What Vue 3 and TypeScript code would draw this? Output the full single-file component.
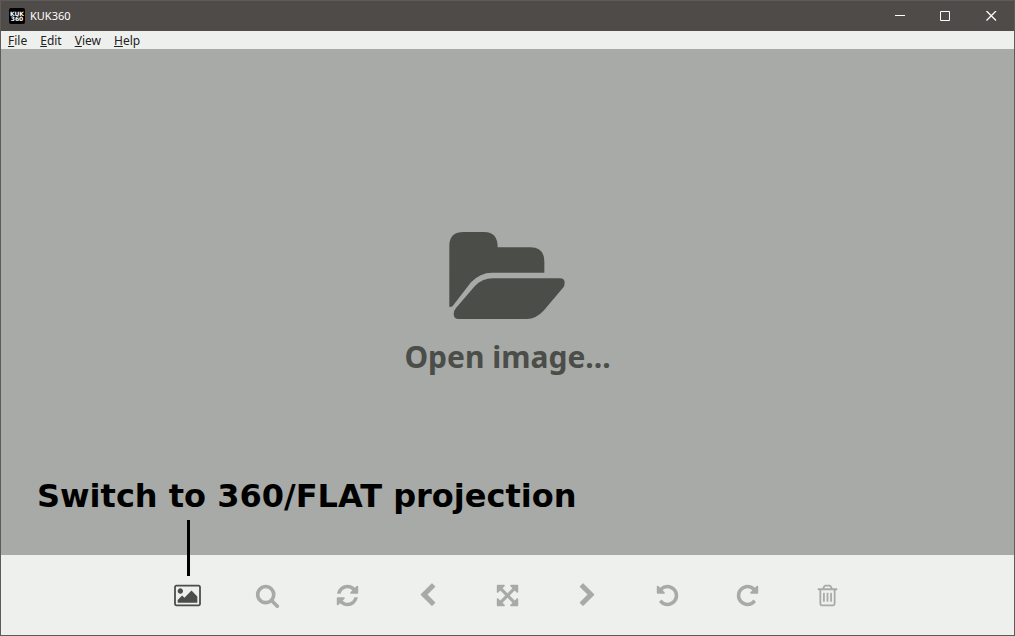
<script setup lang="ts">
interface MenuEntry {
  key: string
  rest: string
}

interface Tool {
  label: string
  viewWidth: number
  width: number
  path: string
  enabled: boolean
}

const menus: MenuEntry[] = [
  { key: 'F', rest: 'ile' },
  { key: 'E', rest: 'dit' },
  { key: 'V', rest: 'iew' },
  { key: 'H', rest: 'elp' },
]

const undoPath =
  'M1664 896q0 156-61 298t-164 245-245 164-298 61q-172 0-327-72.5t-264-204.5q-7-10-6.5-22.5t8.5-20.5l137-138q10-9 25-9 16 2 23 12 73 95 179 147t225 52q104 0 198.5-40.5t163.5-109.5 109.5-163.5 40.5-198.5-40.5-198.5-109.5-163.5-163.5-109.5-198.5-40.5q-98 0-188 35.5t-160 101.5l137 138q31 30 14 69-17 40-59 40h-448q-26 0-45-19t-19-45v-448q0-42 40-59 39-17 69 14l130 129q107-101 244.5-156.5t284.5-55.5q156 0 298 61t245 164 164 245 61 298z'

const redoPath =
  'M1664 256v448q0 26-19 45t-45 19h-448q-42 0-59-40-17-39 14-69l138-138q-148-137-349-137-104 0-198.5 40.5t-163.5 109.5-109.5 163.5-40.5 198.5 40.5 198.5 109.5 163.5 163.5 109.5 198.5 40.5q119 0 225-52t179-147q7-10 23-12 15 0 25 9l137 138q9 8 9.5 20.5t-7.5 22.5q-109 132-264 204.5t-327 72.5q-156 0-298-61t-245-164-164-245-61-298 61-298 164-245 245-164 298-61q147 0 284.5 55.5t244.5 156.5l130-129q29-31 70-14 39 17 39 59z'

const tools: Tool[] = [
  {
    label: 'Switch projection',
    viewWidth: 1920,
    width: 27,
    enabled: true,
    path: 'M640 576q0 80-56 136t-136 56-136-56-56-136 56-136 136-56 136 56 56 136zm1024 384v448h-1408v-192l320-320 160 160 512-512zm96-704h-1600q-13 0-22.5 9.5t-9.5 22.5v1216q0 13 9.5 22.5t22.5 9.5h1600q13 0 22.5-9.5t9.5-22.5v-1216q0-13-9.5-22.5t-22.5-9.5zm160 32v1216q0 66-47 113t-113 47h-1600q-66 0-113-47t-47-113v-1216q0-66 47-113t113-47h1600q66 0 113 47t47 113z',
  },
  {
    label: 'Zoom',
    viewWidth: 1792,
    width: 25,
    enabled: false,
    path: 'M1216 832q0-185-131.5-316.5t-316.5-131.5-316.5 131.5-131.5 316.5 131.5 316.5 316.5 131.5 316.5-131.5 131.5-316.5zm512 832q0 52-38 90t-90 38q-54 0-90-38l-343-342q-179 124-399 124-143 0-273.5-55.5t-225-150-150-225-55.5-273.5 55.5-273.5 150-225 225-150 273.5-55.5 273.5 55.5 225 150 150 225 55.5 273.5q0 220-124 399l343 343q37 37 37 90z',
  },
  {
    label: 'Reset',
    viewWidth: 1792,
    width: 25,
    enabled: false,
    path: 'M1639 1056q0 5-1 7-64 268-268 434.5t-478 166.5q-146 0-282.5-55t-243.5-157l-129 129q-19 19-45 19t-45-19-19-45v-448q0-26 19-45t45-19h448q26 0 45 19t19 45-19 45l-137 137q71 66 161 102t187 36q134 0 250-65t186-179q11-17 53-117 8-23 30-23h192q13 0 22.5 9.5t9.5 22.5zm25-800v448q0 26-19 45t-45 19h-448q-26 0-45-19t-19-45 19-45l138-138q-148-137-349-137-134 0-250 65t-186 179q-11 17-53 117-8 23-30 23h-199q-13 0-22.5-9.5t-9.5-22.5v-7q65-268 270-434.5t480-166.5q146 0 284 55.5t245 156.5l130-129q19-19 45-19t45 19 19 45z',
  },
  {
    label: 'Previous image',
    viewWidth: 1792,
    width: 25,
    enabled: false,
    path: 'M1427 301l-531 531 531 531q19 19 19 45t-19 45l-166 166q-19 19-45 19t-45-19l-742-742q-19-19-19-45t19-45l742-742q19-19 45-19t45 19l166 166q19 19 19 45t-19 45z',
  },
  {
    label: 'Fullscreen',
    viewWidth: 1792,
    width: 25,
    enabled: false,
    path: 'M1411 541l-355 355 355 355 144-144q29-31 70-14 39 17 39 59v448q0 26-19 45t-45 19h-448q-42 0-59-40-17-39 14-69l144-144-355-355-355 355 144 144q31 30 14 69-17 40-59 40h-448q-26 0-45-19t-19-45v-448q0-42 40-59 39-17 69 14l144 144 355-355-355-355-144 144q-19 19-45 19-12 0-24-5-40-17-40-59v-448q0-26 19-45t45-19h448q42 0 59 40 17 39-14 69l-144 144 355 355 355-355-144-144q-31-30-14-69 17-40 59-40h448q26 0 45 19t19 45v448q0 42-39 59-13 5-25 5-26 0-45-19z',
  },
  {
    label: 'Next image',
    viewWidth: 1792,
    width: 25,
    enabled: false,
    path: 'M1363 877l-742 742q-19 19-45 19t-45-19l-166-166q-19-19-19-45t19-45l531-531-531-531q-19-19-19-45t19-45l166-166q19-19 45-19t45 19l742 742q19 19 19 45t-19 45z',
  },
  { label: 'Rotate left', viewWidth: 1792, width: 25, enabled: false, path: undoPath },
  { label: 'Rotate right', viewWidth: 1792, width: 25, enabled: false, path: redoPath },
  {
    label: 'Delete',
    viewWidth: 1792,
    width: 25,
    enabled: false,
    path: 'M704 736v576q0 14-9 23t-23 9h-64q-14 0-23-9t-9-23v-576q0-14 9-23t23-9h64q14 0 23 9t9 23zm256 0v576q0 14-9 23t-23 9h-64q-14 0-23-9t-9-23v-576q0-14 9-23t23-9h64q14 0 23 9t9 23zm256 0v576q0 14-9 23t-23 9h-64q-14 0-23-9t-9-23v-576q0-14 9-23t23-9h64q14 0 23 9t9 23zm128 724v-948h-896v948q0 22 7 40.5t14.5 27 10.5 8.5h832q3 0 10.5-8.5t14.5-27 7-40.5zm-672-1076h448l-48-117q-7-9-17-11h-317q-10 2-17 11zm928 32v64q0 14-9 23t-23 9h-96v948q0 83-47 143.5t-113 60.5h-832q-66 0-113-58.5t-47-141.5v-952h-96q-14 0-23-9t-9-23v-64q0-14 9-23t23-9h309l70-167q15-37 54-63t79-26h320q40 0 79 26t54 63l70 167h309q14 0 23 9t9 23z',
  },
]
</script>

<template>
  <div class="window">
    <header class="titlebar">
      <svg class="logo" viewBox="0 0 16 16" aria-hidden="true">
        <rect width="16" height="16" rx="2" fill="#000" />
        <text x="8" y="8" text-anchor="middle">KUK</text>
        <text x="8" y="13" text-anchor="middle">360</text>
      </svg>
      <span class="title">KUK360</span>
      <div class="controls">
        <button type="button" aria-label="Minimize">
          <svg viewBox="0 0 11 11"><path d="M1 4.500H11" /></svg>
        </button>
        <button type="button" aria-label="Maximize">
          <svg viewBox="0 0 11 11"><path d="M.5 .5H9.500V9.500H.5Z" /></svg>
        </button>
        <button type="button" aria-label="Close">
          <svg viewBox="0 0 11 11"><path d="M.5 0L10 9.500M10 0L.5 9.500" stroke-width="1.300" /></svg>
        </button>
      </div>
    </header>

    <nav class="menubar">
      <button v-for="menu in menus" :key="menu.key" type="button"><u>{{ menu.key }}</u>{{ menu.rest }}</button>
    </nav>

    <main class="stage">
      <button type="button" class="open">
        <svg viewBox="175 36 354 261" aria-hidden="true">
          <path d="M176 261V76Q176 36 220 36H281Q321 36 321 82H419Q461 82 461 124V158H304Q268 158 241 187L186 258Q183 261 176 261Z" />
          <path d="M189 282Q189 272 196 264L252 199Q274 175 307 175H507Q522 175 522 188Q522 197 517 203L460 271Q437 297 408 297H204Q189 297 189 282Z" />
        </svg>
        <span>Open image...</span>
      </button>
      <p class="callout">Switch to 360/FLAT projection</p>
    </main>

    <footer class="toolbar">
      <div v-for="(tool, index) in tools" :key="tool.label" class="slot">
        <span v-if="index === 0" class="pointer"></span>
        <button type="button" :disabled="!tool.enabled" :aria-label="tool.label">
          <svg :width="tool.width" height="25" :viewBox="`0 0 ${tool.viewWidth} 1792`">
            <path :d="tool.path" />
          </svg>
        </button>
      </div>
    </footer>
  </div>
</template>

<style>
body {
  margin: 0;
}
</style>

<style scoped>
.window {
  box-sizing: border-box;
  display: flex;
  flex-direction: column;
  min-height: 100vh;
  border: 1px solid #5e5a59;
  background: #eef0ed;
  font-family: "Noto Sans", "Open Sans", sans-serif;
}

button {
  margin: 0;
  padding: 0;
  border: 0;
  background: none;
  color: inherit;
  font: inherit;
}

svg {
  display: block;
}

.titlebar {
  display: flex;
  align-items: center;
  height: 30px;
  padding-left: 8px;
  background: #4f4b49;
  color: #fff;
}

.logo {
  width: 16px;
  height: 16px;
}

.logo text {
  fill: #fff;
  font: bold 6px "DejaVu Sans", sans-serif;
}

.title {
  margin-left: 5px;
  font-size: 11px;
  line-height: 16px;
}

.controls {
  display: flex;
  align-self: stretch;
  margin-left: auto;
}

.controls button {
  display: flex;
  align-items: center;
  justify-content: center;
  width: 46px;
}

.controls svg {
  width: 11px;
  height: 11px;
  fill: none;
  stroke: #fff;
}

.menubar {
  box-sizing: border-box;
  display: flex;
  gap: 13px;
  height: 18px;
  padding-top: 2px;
  padding-left: 7px;
  color: #222;
  font-size: 12px;
  line-height: 16px;
}

.stage {
  position: relative;
  display: flex;
  flex: 1;
  align-items: center;
  justify-content: center;
  padding-top: 6px;
  background: #a8aaa7;
}

.open {
  display: flex;
  flex-direction: column;
  align-items: center;
  gap: 16px;
  color: #4b4d49;
  font-size: 30px;
  font-weight: bold;
  line-height: 44px;
}

.open svg {
  width: 118px;
  height: 87px;
  fill: currentColor;
}

.callout {
  position: absolute;
  bottom: 40px;
  left: 36px;
  margin: 0;
  color: #000;
  font: bold 32px/38px "DejaVu Sans", sans-serif;
  white-space: nowrap;
}

.toolbar {
  display: flex;
  justify-content: center;
  height: 80px;
  background: #eef0ed;
}

.slot {
  position: relative;
  display: flex;
  width: 80px;
}

.slot button {
  display: flex;
  flex: 1;
  align-items: center;
  justify-content: center;
  color: #4b4d49;
}

.slot button:disabled {
  color: #a8aaa7;
}

.slot svg {
  fill: currentColor;
}

.pointer {
  position: absolute;
  top: -35px;
  left: 39px;
  width: 3px;
  height: 56px;
  background: #000;
}
</style>
